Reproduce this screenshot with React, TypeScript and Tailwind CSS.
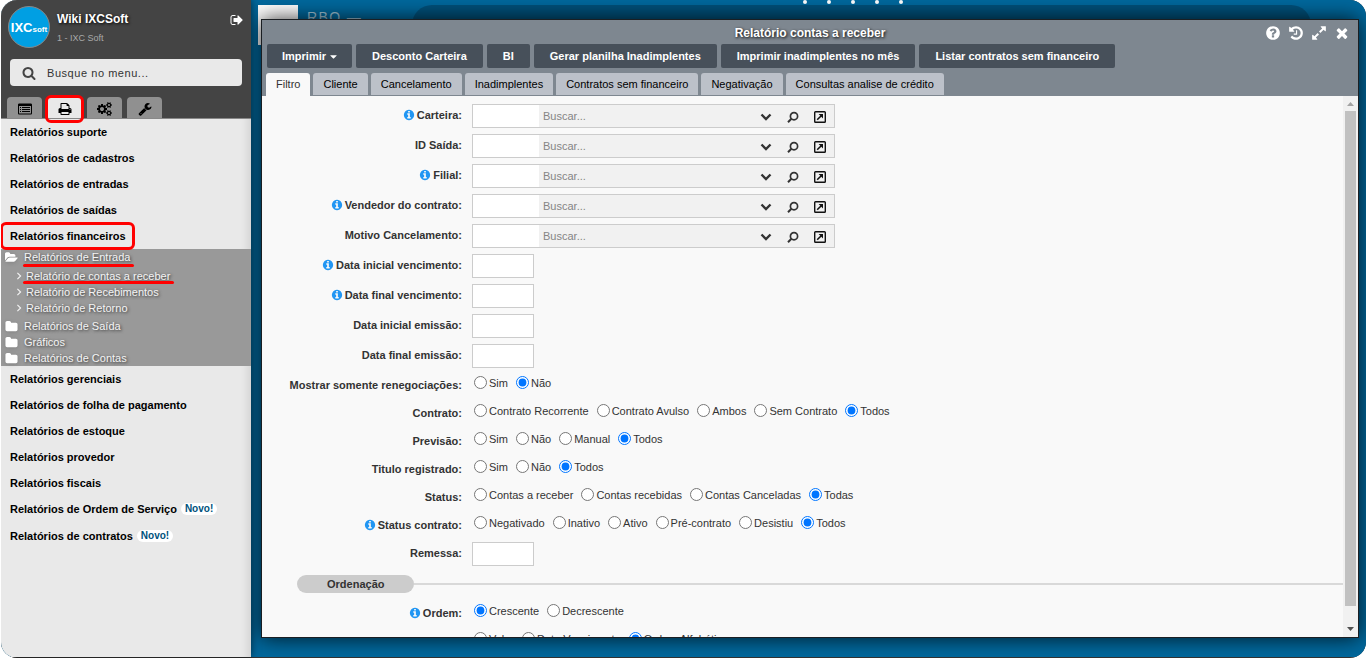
// Receivables report window, opened over the ERP desktop

import { FaCaretDown } from 'react-icons/fa';

interface IconProps {
  d: string;
  className: string;
  viewBox?: string;
}

const PATHS = {
  signOut: 'M704 1440q0 4 1 20t.5 26.5-3 23.5-10 19.5-20.5 6.5h-320q-119 0-203.5-84.5t-84.5-203.5v-704q0-119 84.5-203.5t203.5-84.5h320q13 0 22.5 9.5t9.5 22.5q0 4 1 20t.5 26.5-3 23.5-10 19.5-20.5 6.5h-320q-66 0-113 47t-47 113v704q0 66 47 113t113 47h312l11.5 1 11.5 3 8 5.5 7 9 2 13.5zm928-544q0 26-19 45l-544 544q-19 19-45 19t-45-19-19-45v-288h-448q-26 0-45-19t-19-45v-384q0-26 19-45t45-19h448v-288q0-26 19-45t45-19 45 19l544 544q19 19 19 45z',
  search: 'M1216 832q0-185-131.5-316.5t-316.5-131.5-316.5 131.5-131.5 316.5 131.5 316.5 316.5 131.5 316.5-131.5 131.5-316.5zm512 832q0 52-38 90t-90 38q-54 0-90-38l-343-342q-179 124-399 124-143 0-273.5-55.5t-225-150-150-225-55.5-273.5 55.5-273.5 150-225 225-150 273.5-55.5 273.5 55.5 225 150 150 225 55.5 273.5q0 220-124 399l343 343q37 37 37 90z',
  list: 'M160 192h1472q66 0 113 47t47 113v1088q0 66-47 113t-113 47h-1472q-66 0-113-47t-47-113v-1088q0-66 47-113t113-47zm-32 320v896q0 64 64 64h1408q64 0 64-64v-896zm128 128h128v128h-128zm256 0h1024v128h-1024zm-256 256h128v128h-128zm256 0h1024v128h-1024zm-256 256h128v128h-128zm256 0h1024v128h-1024z',
  print: 'M448 1536h896v-256h-896v256zm0-640h896v-384h-160q-40 0-68-28t-28-68v-160h-640v640zm1152 64q0-26-19-45t-45-19-45 19-19 45 19 45 45 19 45-19 19-45zm128 0v416q0 13-9.5 22.5t-22.5 9.5h-224v160q0 40-28 68t-68 28h-960q-40 0-68-28t-28-68v-160h-224q-13 0-22.5-9.5t-9.5-22.5v-416q0-79 56.5-135.5t135.5-56.5h64v-544q0-40 28-68t68-28h672q40 0 88 20t76 48l152 152q28 28 48 76t20 88v256h64q79 0 135.5 56.5t56.5 135.5z',
  cogs: 'M832 896q0-106-75-181t-181-75-181 75-75 181 75 181 181 75 181-75 75-181zm768 512q0-52-38-90t-90-38-90 38-38 90q0 53 37.5 90.5t90.5 37.5 90.5-37.5 37.5-90.5zm0-1024q0-52-38-90t-90-38-90 38-38 90q0 53 37.5 90.5t90.5 37.5 90.5-37.5 37.5-90.5zm-384 421v185q0 10-7 19.5t-16 10.5l-155 24q-11 35-32 76 34 48 90 115 7 11 7 20 0 12-7 19-23 30-82.5 89.5t-78.5 59.5q-11 0-21-7l-115-90q-37 19-77 31-11 108-23 155-7 24-30 24h-186q-11 0-20-7.5t-10-17.5l-23-153q-34-10-75-31l-118 89q-7 7-20 7-11 0-21-8-144-133-144-160 0-9 7-19 10-14 41-53t47-61q-23-44-35-82l-152-24q-10-1-17-9.5t-7-19.5v-185q0-10 7-19.5t16-10.5l155-24q11-35 32-76-34-48-90-115-7-11-7-20 0-12 7-20 22-30 82-89t79-59q11 0 21 7l115 90q34-18 77-32 11-108 23-154 7-24 30-24h186q11 0 20 7.5t10 17.5l23 153q34 10 75 31l118-89q8-7 20-7 11 0 21 8 144 133 144 160 0 8-7 19-12 16-42 54t-45 60q23 48 34 82l152 23q10 2 17 10.5t7 19.5zm640 533v140q0 16-149 31-12 27-30 52 51 113 51 138 0 4-4 7-122 71-124 71-8 0-46-47t-52-68q-20 2-30 2t-30-2q-14 21-52 68t-46 47q-2 0-124-71-4-3-4-7 0-25 51-138-18-25-30-52-149-15-149-31v-140q0-16 149-31 13-29 30-52-51-113-51-138 0-4 4-7 4-2 35-20t59-34 30-16q8 0 46 46.5t52 67.5q20-2 30-2t30 2q51-71 92-112l6-2q4 0 124 70 4 3 4 7 0 25-51 138 17 23 30 52 149 15 149 31zm0-1024v140q0 16-149 31-12 27-30 52 51 113 51 138 0 4-4 7-122 71-124 71-8 0-46-47t-52-68q-20 2-30 2t-30-2q-14 21-52 68t-46 47q-2 0-124-71-4-3-4-7 0-25 51-138-18-25-30-52-149-15-149-31v-140q0-16 149-31 13-29 30-52-51-113-51-138 0-4 4-7 4-2 35-20t59-34 30-16q8 0 46 46.5t52 67.5q20-2 30-2t30 2q51-71 92-112l6-2q4 0 124 70 4 3 4 7 0 25-51 138 17 23 30 52 149 15 149 31z',
  wrench: 'M448 1472q0-26-19-45t-45-19-45 19-19 45 19 45 45 19 45-19 19-45zm644-420l-682 682q-37 37-90 37-52 0-91-37l-106-108q-38-36-38-90 0-53 38-91l681-681q39 98 114.5 173.5t173.5 114.5zm634-435q0 39-23 106-47 134-164.5 217.5t-258.5 83.5q-185 0-316.5-131.5t-131.5-316.5 131.5-316.5 316.5-131.5q58 0 121.5 16.5t107.5 46.5q16 11 16 28t-16 28l-293 169v224l193 107q5-3 79-48.5t135.5-81 70.5-35.5q15 0 23.5 10t8.5 25z',
  folder: 'M1728 608v704q0 92-66 158t-158 66h-1216q-92 0-158-66t-66-158v-960q0-92 66-158t158-66h320q92 0 158 66t66 158v32h672q92 0 158 66t66 158z',
  folderOpen: 'M1879 952q0 31-31 66l-336 396q-43 51-120.5 86.5t-143.5 35.5h-1088q-34 0-60.5-13t-26.5-43q0-31 31-66l336-396q43-51 120.5-86.5t143.5-35.5h1088q34 0 60.5 13t26.5 43zm-343-344v160h-832q-94 0-197 47.5t-164 119.5l-337 396-5 6q0-4-.5-12.5t-.5-12.5v-960q0-92 66-158t158-66h320q92 0 158 66t66 158v32h544q92 0 158 66t66 158z',
  info: 'M1152 1376v-160q0-14-9-23t-23-9h-96v-512q0-14-9-23t-23-9h-320q-14 0-23 9t-9 23v160q0 14 9 23t23 9h96v320h-96q-14 0-23 9t-9 23v160q0 14 9 23t23 9h448q14 0 23-9t9-23zm-128-896v-160q0-14-9-23t-23-9h-192q-14 0-23 9t-9 23v160q0 14 9 23t23 9h192q14 0 23-9t9-23zm640 416q0 209-103 385.5t-279.5 279.5-385.5 103-385.5-103-279.5-279.5-103-385.5 103-385.5 279.5-279.5 385.5-103 385.5 103 279.5 279.5 103 385.5z',
  question: 'M1024 1376v-192q0-14-9-23t-23-9h-192q-14 0-23 9t-9 23v192q0 14 9 23t23 9h192q14 0 23-9t9-23zm256-672q0-88-55.5-163t-138.5-116-170-41q-243 0-371 213-15 24 8 42l132 100q7 6 19 6 16 0 25-12 53-68 86-92 34-24 86-24 48 0 85.5 26t37.5 59q0 38-20 61t-68 45q-63 28-115.5 86.5t-52.5 125.5v36q0 14 9 23t23 9h192q14 0 23-9t9-23q0-19 21.5-49.5t54.5-49.5q32-18 49-28.5t46-35 44.5-48 28-60.5 12.5-81zm384 192q0 209-103 385.5t-279.5 279.5-385.5 103-385.5-103-279.5-279.5-103-385.5 103-385.5 279.5-279.5 385.5-103 385.5 103 279.5 279.5 103 385.5z',
  history: 'M1664 896q0 156-61 298t-164 245-245 164-298 61q-172 0-327-72.5t-264-204.5q-7-10-6.5-22.5t8.5-20.5l137-138q10-9 25-9 16 2 23 12 73 95 179 147t225 52q104 0 198.5-40.5t163.5-109.5 109.5-163.5 40.5-198.5-40.5-198.5-109.5-163.5-163.5-109.5-198.5-40.5q-98 0-188 35.5t-160 101.5l137 138q31 30 14 69-17 40-59 40h-448q-26 0-45-19t-19-45v-448q0-42 40-59 39-17 69 14l130 129q107-101 244.5-156.5t284.5-55.5q156 0 298 61t245 164 164 245 61 298zm-640-288v448q0 14-9 23t-23 9h-320q-14 0-23-9t-9-23v-64q0-14 9-23t23-9h224v-352q0-14 9-23t23-9h64q14 0 23 9t9 23z',
  expand: 'M883 1056q0 13-10 23l-332 332 144 144q19 19 19 45t-19 45-45 19h-448q-26 0-45-19t-19-45v-448q0-26 19-45t45-19 45 19l144 144 332-332q10-10 23-10t23 10l114 114q10 10 10 23zm781-864v448q0 26-19 45t-45 19-45-19l-144-144-332 332q-10 10-23 10t-23-10l-114-114q-10-10-10-23t10-23l332-332-144-144q-19-19-19-45t19-45 45-19h448q26 0 45 19t19 45z',
  times: 'M1490 1322q0 40-28 68l-136 136q-28 28-68 28t-68-28l-294-294-294 294q-28 28-68 28t-68-28l-136-136q-28-28-28-68t28-68l294-294-294-294q-28-28-28-68t28-68l136-136q28-28 68-28t68 28l294 294 294-294q28-28 68-28t68 28l136 136q28 28 28 68t-28 68l-294 294 294 294q28 28 28 68z',
};

function Icon({ d, className, viewBox = '0 0 1792 1792' }: IconProps) {
  return (
    <svg viewBox={viewBox} className={className} fill="currentColor" fillRule="evenodd" aria-hidden="true">
      <path d={d} />
    </svg>
  );
}

/* ---------- Sidebar ---------- */

const MENU_TABS = [
  { label: 'Cadastros', d: PATHS.list },
  { label: 'Relatórios', d: PATHS.print, active: true },
  { label: 'Configurações', d: PATHS.cogs },
  { label: 'Ferramentas', d: PATHS.wrench },
];

const MENU_TOP = ['Relatórios suporte', 'Relatórios de cadastros', 'Relatórios de entradas', 'Relatórios de saídas'];

const MENU_BOTTOM = [
  { label: 'Relatórios gerenciais' },
  { label: 'Relatórios de folha de pagamento' },
  { label: 'Relatórios de estoque' },
  { label: 'Relatórios provedor' },
  { label: 'Relatórios fiscais' },
  { label: 'Relatórios de Ordem de Serviço', isNew: true },
  { label: 'Relatórios de contratos', isNew: true },
];

const ENTRY_REPORTS = ['Relatório de contas a receber', 'Relatório de Recebimentos', 'Relatório de Retorno'];
const CLOSED_FOLDERS = ['Relatórios de Saída', 'Gráficos', 'Relatórios de Contas'];

function MenuItem({ label, isNew, highlighted }: { label: string; isNew?: boolean; highlighted?: boolean }) {
  return (
    <li>
      <a
        href="#"
        className={`relative flex items-center gap-1 pl-[9px] font-bold text-black ${isNew ? 'h-[27px] pb-px' : 'h-[26px]'}`}
      >
        {label}
        {isNew && (
          <span className="rounded-full bg-white px-1 text-[10px] leading-[12px] text-[#00527d]">Novo!</span>
        )}
        {highlighted && (
          <span className="absolute -left-px -top-px h-7 w-[135px] rounded-md border-3 border-[#f00]" />
        )}
      </a>
    </li>
  );
}

function ReportLink({ label, underlined }: { label: string; underlined?: boolean }) {
  return (
    <li>
      <a href="#" className="flex h-4 items-center gap-1 pl-[15px]">
        <svg viewBox="0 0 6 10" className="h-2 w-[6px]" fill="none" stroke="currentColor" strokeWidth="1.4" aria-hidden="true">
          <path d="M1 1l4 4-4 4" />
        </svg>
        <span className="relative">
          {label}
          {underlined && <span className="absolute -left-[3px] -right-1 top-[12px] h-[3px] rounded-full bg-[#f00]" />}
        </span>
      </a>
    </li>
  );
}

function Sidebar() {
  return (
    <aside className="relative z-10 flex w-[250px] shrink-0 flex-col bg-[#e9e9e9] shadow-[0_0_8px_rgba(0,0,0,0.6)]">
      <div className="bg-[#444] text-white">
        <div className="flex pl-[7px] pr-[7px] pt-[6px]">
          <div className="flex size-[42px] shrink-0 items-baseline justify-center rounded-full border border-[#888] bg-[#009fe3] pt-px text-[13px] font-bold leading-[40px]">
            IXC<span className="text-[8px]">soft</span>
          </div>
          <div className="ml-[7px] flex-1 pt-[5px]">
            <p className="text-xs font-bold leading-4 [text-shadow:1px_1px_3px_#000]">Wiki IXCSoft</p>
            <p className="pt-1 text-[9px] leading-[14px] text-[#aaa]">1 - IXC Soft</p>
          </div>
          <button aria-label="Sair" className="mt-[7px] h-[14px]">
            <Icon d={PATHS.signOut} className="size-[14px]" />
          </button>
        </div>
        <div className="mx-[9px] mt-[11px] flex h-[27px] items-center rounded-[4px] bg-[#e9e9e9] pl-3">
          <Icon d={PATHS.search} className="size-[14px] shrink-0 text-[#444]" />
          <input
            type="text"
            aria-label="Busque no menu"
            placeholder="Busque no menu..."
            className="ml-[11px] min-w-0 flex-1 tracking-wider outline-none placeholder:text-[#333]"
          />
        </div>
        <div className="mt-[11px] flex items-end gap-[5px] border-b border-[#888] pl-[6px]">
          {MENU_TABS.map((tab) => (
            <button
              key={tab.label}
              aria-label={tab.label}
              className={`relative flex h-[21px] w-[35px] items-center justify-center rounded-t-[4px] pt-[3px] text-black ${
                tab.active ? 'bg-[#e9e9e9]' : 'bg-[#909090]'
              }`}
            >
              <Icon d={tab.d} className={tab.d === PATHS.cogs ? 'h-[14px] w-4' : 'size-[14px]'} viewBox={tab.d === PATHS.cogs ? '0 0 1920 1792' : undefined} />
              {tab.active && (
                <span className="absolute -inset-x-[2px] -top-[2px] h-7 rounded-md border-3 border-[#f00]" />
              )}
            </button>
          ))}
        </div>
      </div>
      <nav className="flex-1 shadow-[inset_-10px_0_10px_-8px_rgba(0,0,0,0.12)]">
        <ul>
          {MENU_TOP.map((label) => (
            <MenuItem key={label} label={label} />
          ))}
          <MenuItem label="Relatórios financeiros" highlighted />
        </ul>
        <ul className="bg-[#999] text-[#f4f4f4] [text-shadow:1px_1px_3px_#333]">
          <li>
            <a href="#" className="flex h-4 items-center gap-[6px] pl-1">
              <Icon d={PATHS.folderOpen} className="h-[13px] w-[13px] text-white drop-shadow-sm" viewBox="0 0 1920 1792" />
              <span className="relative">
                Relatórios de Entrada
                <span className="absolute -left-px -right-1 top-[14px] h-[3px] rounded-full bg-[#f00]" />
              </span>
            </a>
            <ul className="pb-[2px] pt-[3px]">
              {ENTRY_REPORTS.map((label, index) => (
                <ReportLink key={label} label={label} underlined={index === 0} />
              ))}
            </ul>
          </li>
          {CLOSED_FOLDERS.map((label) => (
            <li key={label}>
              <a href="#" className="flex h-4 items-center gap-[6px] pl-1">
                <Icon d={PATHS.folder} className="size-[13px] text-white drop-shadow-sm" />
                {label}
              </a>
            </li>
          ))}
        </ul>
        <ul>
          {MENU_BOTTOM.map((item) => (
            <MenuItem key={item.label} {...item} />
          ))}
        </ul>
      </nav>
    </aside>
  );
}

/* ---------- Form fields ---------- */

interface RowProps {
  id: string;
  label: string;
  info?: boolean;
  children: React.ReactNode;
}

function Label({ id, label, info }: Omit<RowProps, 'children'>) {
  return (
    <label
      id={`${id}-label`}
      htmlFor={id}
      className="flex h-7 w-[200px] shrink-0 items-center justify-end gap-[2px] font-bold"
    >
      {info && <Icon d={PATHS.info} className="size-3 text-[#2196f3]" />}
      {label}:
    </label>
  );
}

function FieldRow({ children, ...label }: RowProps) {
  return (
    <div className="flex h-[30px] gap-[10px]">
      <Label {...label} />
      <div className="pt-[3px]">{children}</div>
    </div>
  );
}

function LookupField({ id, label, info }: { id: string; label: string; info?: boolean }) {
  return (
    <FieldRow id={id} label={label} info={info}>
      <div className="flex h-6 w-[363px] border border-[#ccc] bg-[#f1f1f1] pr-px">
        <input id={id} type="text" className="w-[66px] bg-white px-1 outline-none" />
        <input
          type="text"
          aria-label={`Buscar ${label}`}
          placeholder="Buscar..."
          className="min-w-0 flex-1 px-1 outline-none placeholder:text-[#858585]"
        />
        <button aria-label="Abrir lista" className="flex w-[27px] items-center justify-center pt-[2px]">
          <svg viewBox="0 0 12 8" className="h-2 w-3" fill="none" stroke="#333" strokeWidth="2.4" aria-hidden="true">
            <path d="M1.5 1.5L6 6l4.500-4.500" />
          </svg>
        </button>
        <button aria-label="Pesquisar" className="flex w-[27px] items-center justify-center pt-px">
          <svg viewBox="0 0 12 12" className="size-3" fill="none" stroke="#333" strokeWidth="1.700" aria-hidden="true">
            <circle cx="7" cy="5.200" r="3.600" />
            <path d="M4.400 7.800L1 11.200" strokeWidth="2" />
          </svg>
        </button>
        <button aria-label="Abrir cadastro" className="flex w-[27px] items-center justify-center pt-px">
          <svg viewBox="0 0 12 12" className="size-3" fill="none" stroke="#111" strokeWidth="1.400" aria-hidden="true">
            <rect x="0.700" y="0.700" width="10.600" height="10.600" rx="0.800" />
            <path d="M3.200 8.800L7.500 4.500" strokeWidth="1.600" />
            <path d="M4.600 3h4.400v4.400z" fill="#111" stroke="none" />
          </svg>
        </button>
      </div>
    </FieldRow>
  );
}

function TextField({ id, label, info }: { id: string; label: string; info?: boolean }) {
  return (
    <FieldRow id={id} label={label} info={info}>
      <input id={id} type="text" className="h-6 w-[62px] border border-[#ccc] bg-white px-1 outline-none" />
    </FieldRow>
  );
}

interface RadioRowProps {
  id: string;
  label: string;
  info?: boolean;
  options: string[];
  selected: string;
}

function RadioRow({ id, label, info, options, selected }: RadioRowProps) {
  return (
    <div role="radiogroup" aria-labelledby={`${id}-label`} className="flex h-7 gap-[10px]">
      {label ? <Label id={id} label={label} info={info} /> : <div className="w-[200px] shrink-0" />}
      <div className="flex items-start gap-2 whitespace-nowrap pl-[2px] pt-[5px]">
        {options.map((option, index) => (
          <label key={option} className="flex h-[14px] items-start gap-[2px]">
            <input
              id={index === 0 ? id : undefined}
              type="radio"
              name={id}
              defaultChecked={option === selected}
              className="m-0 size-[13px]"
            />
            {option}
          </label>
        ))}
      </div>
    </div>
  );
}

/* ---------- Report window ---------- */

const ACTIONS = [
  'Desconto Carteira',
  'BI',
  'Gerar planilha Inadimplentes',
  'Imprimir inadimplentes no mês',
  'Listar contratos sem financeiro',
];

const TABS = [
  'Filtro',
  'Cliente',
  'Cancelamento',
  'Inadimplentes',
  'Contratos sem financeiro',
  'Negativação',
  'Consultas analise de crédito',
];

const WINDOW_TOOLS = [
  { label: 'Ajuda', d: PATHS.question },
  { label: 'Histórico', d: PATHS.history },
  { label: 'Maximizar', d: PATHS.expand },
  { label: 'Fechar', d: PATHS.times },
];

function WindowHeader() {
  return (
    <header className="bg-[#7e8790]">
      <div className="grid h-6 grid-cols-[1fr_auto_1fr] items-center pt-[2px]">
        <h1 className="col-start-2 text-xs font-bold text-white [text-shadow:1px_1px_3px_#000]">
          Relatório contas a receber
        </h1>
        <div className="flex justify-end gap-[7px] pr-2 text-white">
          {WINDOW_TOOLS.map((tool) => (
            <button key={tool.label} aria-label={tool.label}>
              <Icon d={tool.d} className="size-4" />
            </button>
          ))}
        </div>
      </div>
      <div className="flex gap-1 pl-[5px] font-bold text-white">
        <button className="flex h-6 items-center gap-1 rounded-[2px] bg-[#47505a] px-[15px]">
          Imprimir
          <FaCaretDown className="h-[11px] w-[7px]" />
        </button>
        {ACTIONS.map((action) => (
          <button key={action} className="h-6 whitespace-nowrap rounded-[2px] bg-[#47505a] px-4">
            {action}
          </button>
        ))}
      </div>
      <div role="tablist" className="mt-[5px] flex gap-[3px] pl-1">
        {TABS.map((tab, index) => (
          <button
            key={tab}
            role="tab"
            aria-selected={index === 0}
            className={`whitespace-nowrap rounded-t-[3px] px-[10px] ${
              index === 0 ? 'h-[23px] bg-[#f9f9f9] pb-px text-[#333]' : 'mb-px h-[22px] bg-[#bcc1c9] text-black'
            }`}
          >
            {tab}
          </button>
        ))}
      </div>
    </header>
  );
}

function Scrollbar() {
  return (
    <div className="flex w-[15px] shrink-0 flex-col items-center bg-[#f1f1f1]">
      <svg viewBox="0 0 15 15" className="size-[15px] shrink-0" aria-hidden="true">
        <path d="M4 10h7L7.500 6z" fill="#a3a3a3" />
      </svg>
      <div className="mb-4 w-[11px] flex-1 bg-[#c1c1c1]" />
      <svg viewBox="0 0 15 15" className="size-[15px] shrink-0" aria-hidden="true">
        <path d="M4 5h7L7.500 9z" fill="#505050" />
      </svg>
    </div>
  );
}

function ReportWindow() {
  return (
    <section className="relative flex min-w-0 flex-1 flex-col border border-[#1b1f23] bg-[#f9f9f9] text-[#333] shadow-[0_0_20px_rgba(0,0,0,0.8)]">
      <WindowHeader />
      <div className="flex min-h-0 flex-1">
        <form className="min-w-0 flex-1 overflow-hidden pt-[5px]">
          <LookupField id="carteira" label="Carteira" info />
          <LookupField id="id-saida" label="ID Saída" />
          <LookupField id="filial" label="Filial" info />
          <LookupField id="vendedor" label="Vendedor do contrato" info />
          <LookupField id="motivo" label="Motivo Cancelamento" />
          <TextField id="venc-inicial" label="Data inicial vencimento" info />
          <TextField id="venc-final" label="Data final vencimento" info />
          <TextField id="emissao-inicial" label="Data inicial emissão" />
          <TextField id="emissao-final" label="Data final emissão" />
          <RadioRow id="renegociacoes" label="Mostrar somente renegociações" options={['Sim', 'Não']} selected="Não" />
          <RadioRow
            id="contrato"
            label="Contrato"
            options={['Contrato Recorrente', 'Contrato Avulso', 'Ambos', 'Sem Contrato', 'Todos']}
            selected="Todos"
          />
          <RadioRow id="previsao" label="Previsão" options={['Sim', 'Não', 'Manual', 'Todos']} selected="Todos" />
          <RadioRow id="registrado" label="Titulo registrado" options={['Sim', 'Não', 'Todos']} selected="Todos" />
          <RadioRow
            id="status"
            label="Status"
            options={['Contas a receber', 'Contas recebidas', 'Contas Canceladas', 'Todas']}
            selected="Todas"
          />
          <RadioRow
            id="status-contrato"
            label="Status contrato"
            info
            options={['Negativado', 'Inativo', 'Ativo', 'Pré-contrato', 'Desistiu', 'Todos']}
            selected="Todos"
          />
          <TextField id="remessa" label="Remessa" />
          <div className="my-[6px] flex items-center pl-[35px]">
            <h2 className="h-[18px] rounded-full bg-[#ccc] px-[30px] font-bold leading-[18px]">Ordenação</h2>
            <div className="h-[2px] flex-1 bg-[#d9d9d9]" />
          </div>
          <RadioRow id="ordem" label="Ordem" info options={['Crescente', 'Decrescente']} selected="Crescente" />
          <RadioRow
            id="ordenar-por"
            label=""
            options={['Valor', 'Data Vencimento', 'Ordem Alfabética']}
            selected="Ordem Alfabética"
          />
        </form>
        <Scrollbar />
      </div>
    </section>
  );
}

// Parts of the desktop that stay visible behind the window
function Backdrop() {
  return (
    <div className="absolute inset-0" aria-hidden="true">
      <div className="absolute left-[7px] top-[5px] size-10 bg-white" />
      <p className="absolute left-14 top-[7px] text-sm tracking-widest text-[#9fc3d6]">RBO —</p>
      <div className="absolute left-[161px] right-[55px] top-[5px] h-10 rounded-[20px] bg-[#00507a]" />
      <div className="absolute left-[552px] top-0 flex gap-5">
        {[0, 1, 2, 3, 4].map((dot) => (
          <span key={dot} className="size-1 rounded-full bg-white" />
        ))}
      </div>
    </div>
  );
}

export default function App() {
  return (
    <div className="h-screen bg-white pl-px font-['Liberation_Sans',Arial,sans-serif] text-[11px] leading-[14px]">
      <div className="h-full overflow-hidden rounded-2xl bg-[#333] pb-px">
        <div className="flex h-full bg-[#00689d]">
          <Sidebar />
          <main className="relative flex min-w-0 flex-1 pb-[19px] pl-[10px] pr-[7px] pt-[19px]">
            <Backdrop />
            <ReportWindow />
          </main>
        </div>
      </div>
    </div>
  );
}
